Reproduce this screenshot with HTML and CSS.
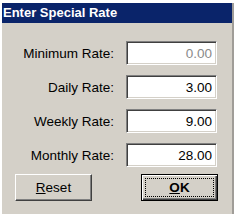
FILE: index.html
```html
<!DOCTYPE html>
<html>
<head>
    <link rel="stylesheet" href="styles.css">
</head>
<body>
    <div class="dialog">
        <div class="title">Enter Special Rate</div>

        <div class="fields">
            <div class="row">
                <label for="minimum">Minimum Rate:</label>
                <input type="text" id="minimum" class="field disabled" value="0.00" readonly>
            </div>
            <div class="row">
                <label for="daily">Daily Rate:</label>
                <input type="text" id="daily" class="field" value="3.00">
            </div>
            <div class="row">
                <label for="weekly">Weekly Rate:</label>
                <input type="text" id="weekly" class="field" value="9.00">
            </div>
            <div class="row">
                <label for="monthly">Monthly Rate:</label>
                <input type="text" id="monthly" class="field" value="28.00">
            </div>
        </div>

        <div class="buttons">
            <button class="btn"><u>R</u>eset</button>
            <button class="btn default"><span class="focus"><u>O</u>K</span></button>
        </div>
    </div>
</body>
</html>
```

FILE: styles.css
```css
body {
    margin: 0;
    background: #fff;
    font-family: 'Liberation Sans', Arial, sans-serif;
    font-size: 13.5px;
}
.dialog {
    margin: 3px 0 0 2px;
    width: 230px;
    height: 211px;
    background: #d4d0c8;
    border-right: 2px solid #a09d98;
}
.title {
    height: 20px;
    line-height: 20px;
    padding-left: 1px;
    background: #0a246a;
    color: #fff;
    font-size: 13px;
    font-weight: bold;
}
.fields {
    padding-top: 18px;
    display: flex;
    flex-direction: column;
    gap: 10px;
}
.row {
    display: flex;
    align-items: center;
    height: 24px;
}
.row label {
    width: 112px;
    text-align: right;
    margin-right: 12px;
}
.field {
    width: 91px;
    height: 24px;
    box-sizing: border-box;
    margin: 0;
    padding: 0 4px 0 0;
    border: 1px solid;
    border-color: #808080 #fff #fff #808080;
    box-shadow: inset 1px 1px #404040, inset -1px -1px #d4d0c8;
    background: #fff;
    font-family: inherit;
    font-size: 13.5px;
    color: #000;
    text-align: right;
    outline: none;
}
.field.disabled {
    color: #8a8a8a;
}
.buttons {
    display: flex;
    gap: 49px;
    padding: 7px 0 0 13px;
}
.btn {
    width: 77px;
    height: 27px;
    margin: 0;
    padding: 0;
    box-sizing: border-box;
    border: 1px solid;
    border-color: #fff #404040 #404040 #fff;
    box-shadow: inset -1px -1px #808080;
    background: #d4d0c8;
    font-family: inherit;
    font-size: 13.5px;
    color: #000;
}
.btn.default {
    border: 1px solid #000;
    box-shadow: inset 1px 1px #fff, inset -1px -1px #404040, inset -2px -2px #808080;
    font-weight: bold;
    padding: 3px;
}
.focus {
    display: block;
    height: 100%;
    box-sizing: border-box;
    border: 1px dotted #000;
    line-height: 17px;
}
```
